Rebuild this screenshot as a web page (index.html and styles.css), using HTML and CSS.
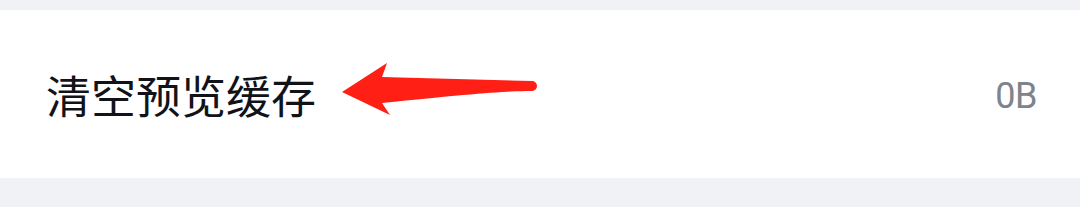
FILE: index.html
```html
<!DOCTYPE html>
<html lang="zh-CN">
<head>
<meta charset="utf-8">
<title>清空预览缓存</title>
<link rel="stylesheet" href="styles.css">
</head>
<body>
<div class="page">
  <div class="row">
    <span class="label">清空预览缓存</span>
    <span class="value">0B</span>
  </div>
  <svg class="arrow" width="1080" height="207" viewBox="0 0 1080 207" aria-hidden="true">
    <path d="M342 92 L387 63 L382 77 L532 81 A5 5 0 0 1 532 91 C505 91 470 94 382 103 L390 115 Z" fill="#ff1f14"/>
  </svg>
</div>
</body>
</html>
```
FILE: styles.css
```css
html, body {
  margin: 0;
  padding: 0;
  background: #f1f2f5;
}
.page {
  position: relative;
  width: 1080px;
  height: 207px;
  padding-top: 10px;
  box-sizing: border-box;
}
.row {
  height: 168px;
  background: #ffffff;
  display: flex;
  align-items: center;
  justify-content: space-between;
  padding: 0 43px 0 46px;
  box-sizing: border-box;
}
.label {
  font-family: "Noto Sans CJK SC", "Noto Sans", sans-serif;
  font-size: 45px;
  color: #111318;
  line-height: 1;
}
.value {
  font-family: Roboto, "Liberation Sans", sans-serif;
  font-size: 36px;
  color: #7e838c;
  line-height: 1;
  margin-top: 3px;
  letter-spacing: -0.5px;
}
.arrow {
  position: absolute;
  left: 0;
  top: 0;
  pointer-events: none;
}
```
